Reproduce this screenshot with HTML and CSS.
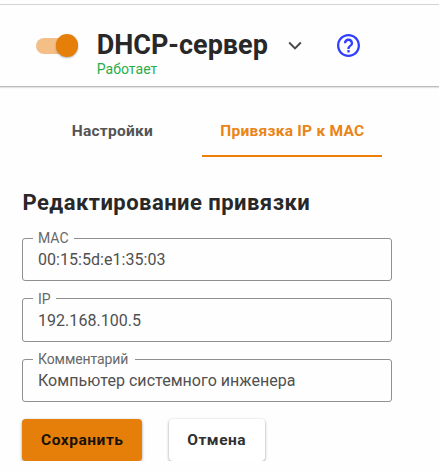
FILE: index.html
```html
<!DOCTYPE html>
<html lang="ru">
<head>
<meta charset="utf-8">
<title>DHCP-сервер</title>
<link rel="stylesheet" href="styles.css">
</head>
<body>
<header class="header">
  <span class="switch" role="switch" aria-checked="true"><span class="switch-thumb"></span></span>
  <div class="heading">
    <h1 class="title">DHCP-сервер</h1>
    <span class="status">Работает</span>
  </div>
  <svg class="chevron" viewBox="0 0 14 10"><path d="M1.2 1.5 7 7.3l5.8-5.8"/></svg>
  <svg class="help" viewBox="0 0 20 20"><path d="M9 16h2v-2H9v2zm1-16C4.480 0 0 4.480 0 10s4.480 10 10 10 10-4.480 10-10S15.520 0 10 0zm0 18c-4.410 0-8-3.590-8-8s3.590-8 8-8 8 3.590 8 8-3.590 8-8 8zm0-14C7.790 4 6 5.790 6 8h2c0-1.100.9-2 2-2s2 .9 2 2c0 2-3 1.750-3 5h2c0-2.250 3-2.500 3-5 0-2.210-1.790-4-4-4z"/></svg>
</header>
<nav class="tabs">
  <a class="tab tab-settings"><span>Настройки</span></a>
  <a class="tab tab-active"><span>Привязка IP к MAC</span></a>
</nav>
<main class="content">
  <h2 class="subtitle">Редактирование привязки</h2>
  <form class="form">
    <fieldset class="field"><legend>MAC</legend><span class="value">00:15:5d:e1:35:03</span></fieldset>
    <fieldset class="field"><legend>IP</legend><span class="value">192.168.100.5</span></fieldset>
    <fieldset class="field"><legend class="legend-comment">Комментарий</legend><span class="value">Компьютер системного инженера</span></fieldset>
    <div class="actions">
      <button type="button" class="button button-primary">Сохранить</button>
      <button type="button" class="button button-cancel">Отмена</button>
    </div>
  </form>
</main>
</body>
</html>
```
FILE: styles.css
```css
* { box-sizing: border-box; }
body {
  margin: 0;
  padding-top: 4px;
  background: #fefefe;
  color: #282828;
  font-family: Roboto, sans-serif;
  overflow: hidden;
}
.header {
  display: flex;
  align-items: flex-start;
  height: 83px;
  padding: 25px 0 0 36px;
  border-top: 1px solid #d4d4d4;
  border-bottom: 1px solid #bdbdbd;
  box-shadow: 0 1px 1px #e2e2e2;
}
.switch {
  display: flex;
  justify-content: flex-end;
  align-items: center;
  width: 42px;
  height: 16px;
  margin-top: 7.5px;
  border-radius: 8px;
  background: linear-gradient(#f4bf86, #f4bf86) left / 36px 16px no-repeat;
}
.switch-thumb {
  width: 22.5px;
  height: 22.5px;
  flex: none;
  border-radius: 50%;
  background: #e67e0a;
  box-shadow: 0 1px 2px rgba(0, 0, 0, .3);
}
.heading {
  width: 172px;
  margin-left: 18.7px;
  white-space: nowrap;
}
.title {
  margin: 0;
  font-size: 27px;
  font-weight: 700;
  line-height: 31px;
}
.status {
  display: block;
  font-size: 14px;
  line-height: 16px;
  letter-spacing: .05px;
  color: #28ad48;
}
.chevron {
  width: 14px;
  height: 10px;
  margin: 11px 0 0 19px;
  fill: none;
  stroke: #484848;
  stroke-width: 1.9;
}
.help {
  width: 23px;
  height: 23px;
  margin: 4px 0 0 35.3px;
  fill: #303fff;
}
.tabs {
  display: flex;
  height: 70px;
  padding: 22px 0 0 22.4px;
}
.tab {
  display: flex;
  justify-content: center;
  align-items: center;
  width: 180px;
  height: 48px;
  padding-bottom: 5px;
  font-size: 15.5px;
  font-weight: 700;
  letter-spacing: .25px;
  color: #545454;
}
.tab-active {
  padding-bottom: 3px;
  border-bottom: 2px solid #ee7f08;
  color: #e98416;
}
.content { padding: 0 22px; }
.subtitle {
  margin: 0;
  padding: 32px 0 0 .5px;
  font-size: 22px;
  font-weight: 700;
  line-height: 28px;
  letter-spacing: .46px;
}
.form {
  display: flex;
  flex-direction: column;
  gap: 9.5px;
  padding-top: 13px;
}
.field {
  width: 370px;
  height: 51px;
  min-width: 0;
  margin: 0;
  padding: 4px 15px 0;
  border: 1px solid #909090;
  border-radius: 3px;
}
.field legend {
  margin-left: -5px;
  padding: 0 5px;
  font-size: 14px;
  line-height: 16px;
  color: #686868;
}
.field .legend-comment {
  padding-right: 7px;
  font-size: 14px;
  letter-spacing: -.1px;
}
.value {
  display: block;
  font-size: 16px;
  line-height: 20px;
  letter-spacing: .04px;
  color: #505050;
  white-space: nowrap;
}
.actions {
  display: flex;
  gap: 26.4px;
  padding: 7.5px 0 0 .3px;
}
.button {
  width: 120px;
  height: 42px;
  padding: 0;
  border: 0;
  border-radius: 4px;
  background: #e67e0a;
  color: #17120b;
  font: 700 15.5px Roboto, sans-serif;
  letter-spacing: .53px;
  box-shadow: 0 1px 3px rgba(0, 0, 0, .4);
}
.button-cancel {
  width: 96px;
  background: #fff;
  color: #303030;
}
```
